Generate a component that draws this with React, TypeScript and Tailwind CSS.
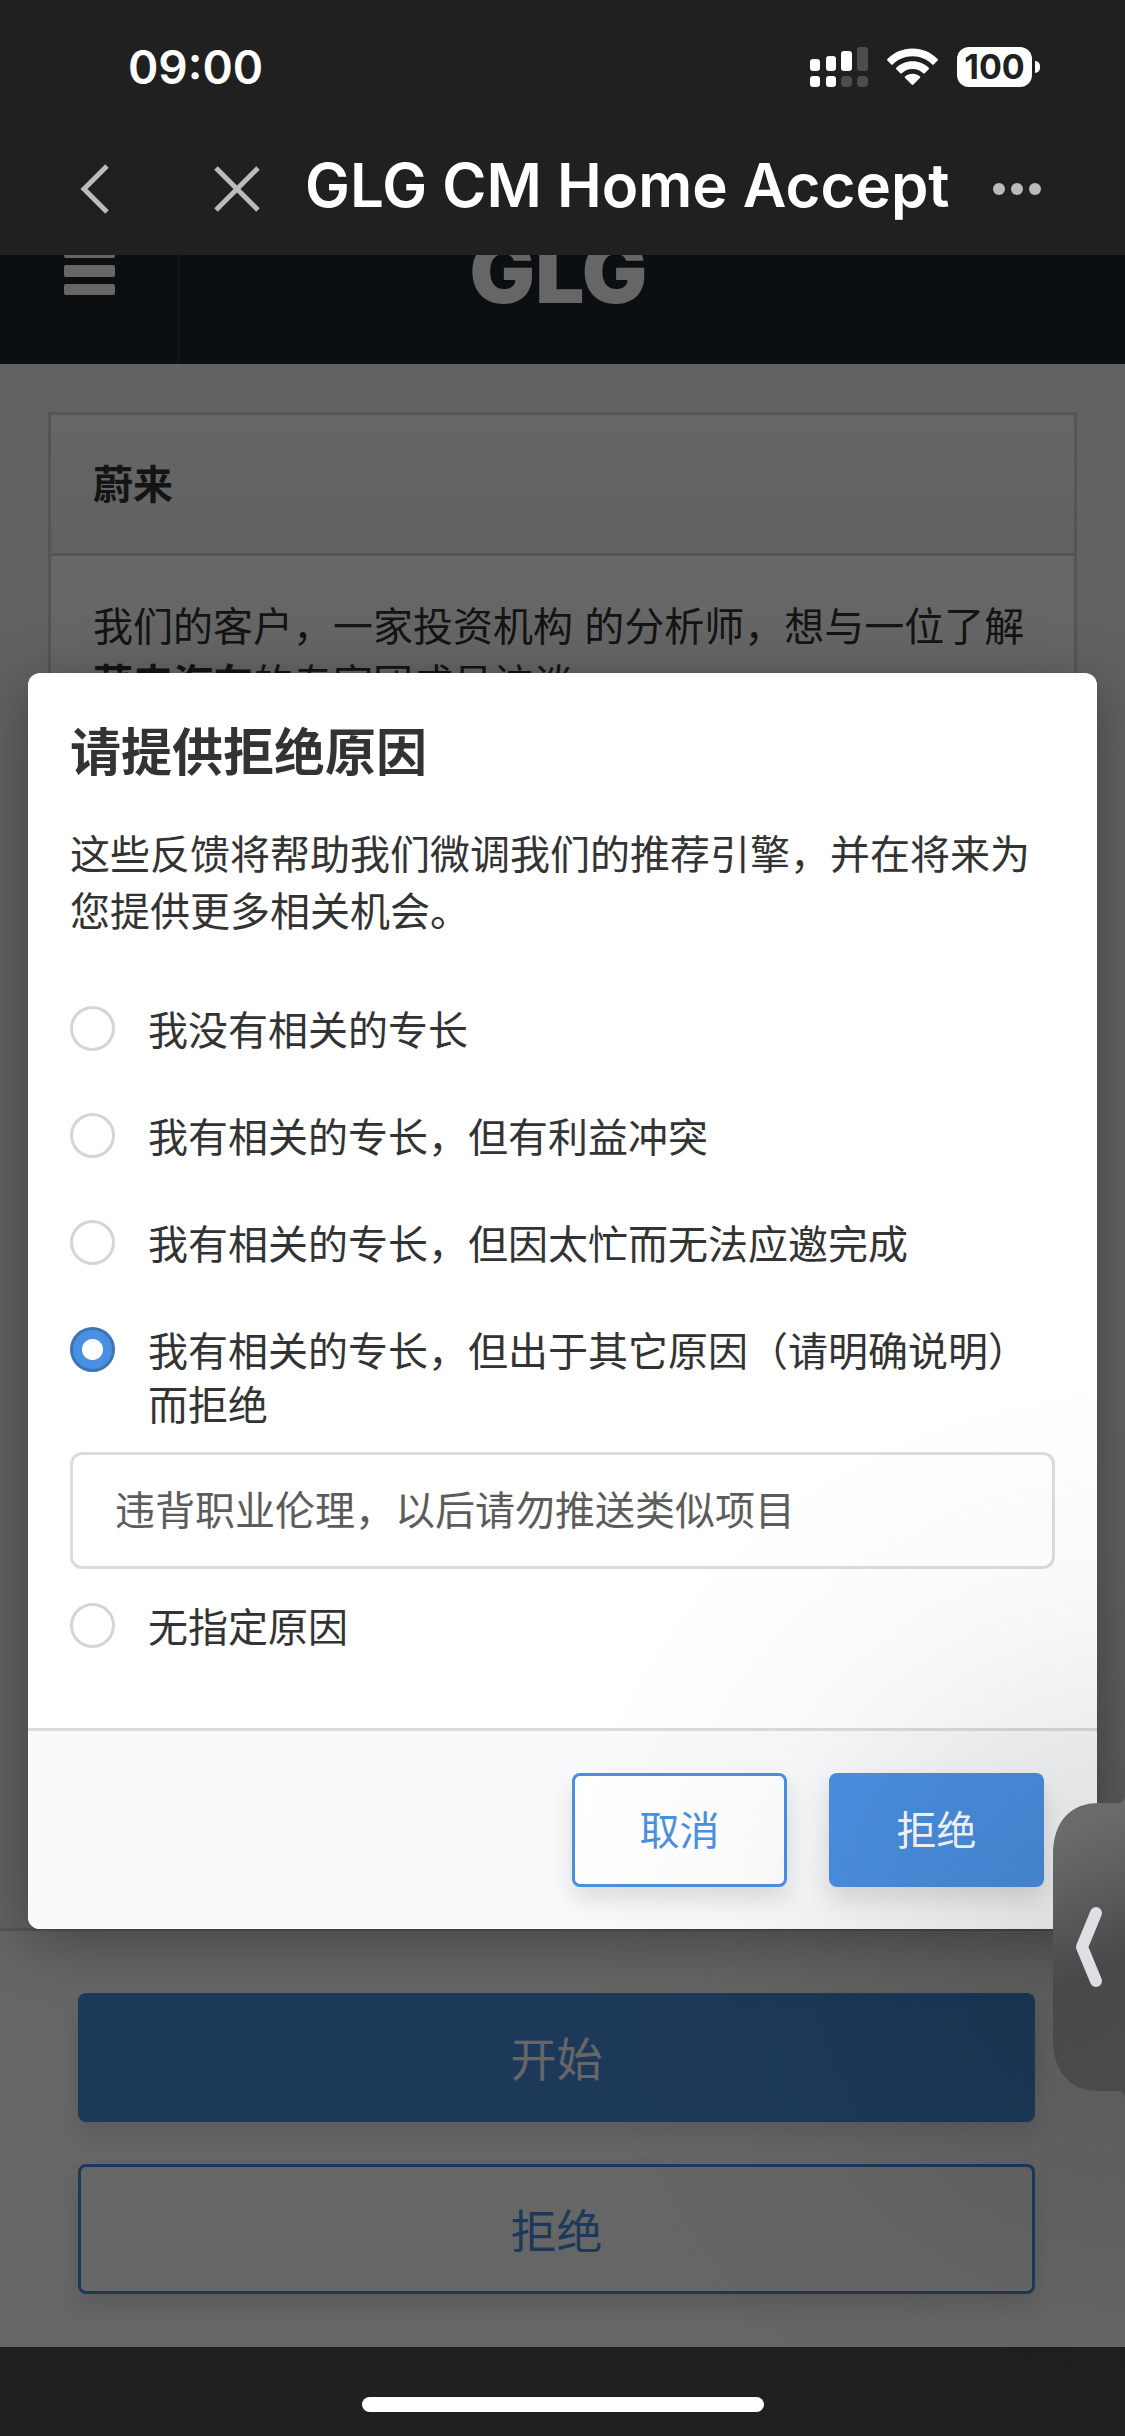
import React, { useState } from 'react';

const REASONS = [
  { id: 'no-expertise', label: '我没有相关的专长' },
  { id: 'conflict', label: '我有相关的专长，但有利益冲突' },
  { id: 'too-busy', label: '我有相关的专长，但因太忙而无法应邀完成' },
  { id: 'other', label: '我有相关的专长，但出于其它原因（请明确说明）而拒绝' },
  { id: 'unspecified', label: '无指定原因' },
];

function StatusBar() {
  return (
    <div className="h-[123px] pl-32 pr-[85px] pt-[38px] flex items-start justify-between">
      <span className="text-[46px] leading-[58px] font-semibold">09:00</span>
      <div className="h-[58px] flex items-center gap-[19px]">
        <svg width="58" height="40" viewBox="0 0 58 40" fill="#fff" aria-hidden="true">
          <rect x="0" y="12" width="10" height="12" rx="3" />
          <rect x="16" y="9" width="10" height="15" rx="3" />
          <rect x="31" y="4" width="11" height="20" rx="3" />
          <rect x="47" y="0" width="11" height="24" rx="3" fill="#4d4d4d" />
          <rect x="0" y="29" width="10" height="11" rx="3" />
          <rect x="16" y="29" width="10" height="11" rx="3" />
          <rect x="31" y="29" width="11" height="11" rx="4" fill="#4d4d4d" />
          <rect x="47" y="29" width="11" height="11" rx="4" fill="#4d4d4d" />
        </svg>
        <svg width="51" height="40" viewBox="0 0 51 40" fill="#fff" aria-hidden="true">
          <path d="M25.500 1.500C15.500 1.500 6.700 5.600.4 12c-.5.500-.5 1 0 1.500l3.900 3.900c.5.500 1 .5 1.500 0C10.900 12.400 17.800 9.300 25.500 9.300s14.600 3.100 19.700 8.100c.5.500 1 .5 1.500 0l3.900-3.900c.5-.5.5-1 0-1.500C44.300 5.600 35.500 1.500 25.500 1.500Z" />
          <path d="M25.500 14.200c-6.300 0-12 2.500-16.200 6.500-.5.500-.5 1 0 1.500l4 4c.5.500 1 .5 1.500 0 2.800-2.600 6.500-4.200 10.700-4.200s7.900 1.600 10.700 4.200c.5.500 1 .5 1.500 0l4-4c.5-.5.5-1 0-1.500-4.200-4-9.900-6.500-16.200-6.500Z" />
          <path d="M25.500 26.800c-2.900 0-5.400 1-7.400 2.700-.5.400-.5 1 0 1.500l6.500 6.600c.5.500 1.300.5 1.800 0l6.500-6.600c.5-.5.5-1.100 0-1.500-2-1.700-4.500-2.700-7.400-2.700Z" />
        </svg>
        <div className="flex items-center gap-[3px]">
          <span className="w-[75px] h-10 rounded-xl bg-white text-[#202020] text-[34px] leading-10 font-bold text-center">
            100
          </span>
          <span className="w-[5px] h-3 rounded-r-full bg-white" />
        </div>
      </div>
    </div>
  );
}

function NavBar() {
  return (
    <nav className="h-[132px] pl-20 pr-[84px] flex items-center">
      <button type="button" aria-label="返回" className="w-[132px] h-full flex items-center">
        <svg width="30" height="50" viewBox="0 0 30 50" fill="none" stroke="#bbb" strokeWidth="5">
          <path d="M27 2 4 25l23 23" />
        </svg>
      </button>
      <button type="button" aria-label="关闭" className="w-[93px] h-full flex items-center">
        <svg width="50" height="50" viewBox="0 0 50 50" fill="none" stroke="#bbb" strokeWidth="5">
          <path d="M4 4l42 42M46 4 4 46" />
        </svg>
      </button>
      <h1 className="flex-1 pb-2 text-[60px] leading-[72px] font-semibold whitespace-nowrap">
        GLG CM Home Accept
      </h1>
      <button type="button" aria-label="更多" className="h-full flex items-center">
        <svg width="48" height="12" viewBox="0 0 48 12" fill="#bbb">
          <circle cx="6" cy="6" r="6" />
          <circle cx="24" cy="6" r="6" />
          <circle cx="42" cy="6" r="6" />
        </svg>
      </button>
    </nav>
  );
}

function PageContent() {
  return (
    <div className="flex-1 flex flex-col">
      <header className="h-[109px] overflow-hidden bg-[#1c262d] text-white flex">
        <button type="button" aria-label="菜单" className="w-[180px] shrink-0 border-r-3 border-white/8 pl-16 pb-[69px] flex items-end">
          <svg width="51" height="49" viewBox="0 0 51 49" fill="#fff" className="shrink-0">
            <rect width="51" height="12" rx="2" />
            <rect y="19" width="51" height="12" rx="2" />
            <rect y="38" width="51" height="11" rx="2" />
          </svg>
        </button>
        <div className="flex-1 pr-[188px] pb-[42px] flex items-end justify-center">
          <span className="font-black text-[87px] leading-[100px]">GLG</span>
        </div>
      </header>

      <main className="flex-1 bg-[#f2f4f8] px-12 pt-12">
        <section className="h-full bg-white border-3 border-b-0 border-[#d5d5d5]">
          <div className="h-[141px] px-[42px] flex items-center border-b-3 border-[#d5d5d5] bg-linear-to-b from-white to-[#f2f4f8]">
            <h2 className="text-[40px] leading-[57px] font-bold">蔚来</h2>
          </div>
          <p className="px-[42px] pt-[42px] text-[40px] leading-[57px]">
            我们的客户，一家投资机构 的分析师，想与一位了解<b>蔚来汽车</b>的专家团成员访谈
          </p>
        </section>
      </main>

      <div className="border-t-3 border-[#d5d5d5] bg-white pl-[78px] pr-[90px] pt-[62px] pb-[53px] flex flex-col gap-[42px]">
        <button type="button" className="h-[129px] pt-1 rounded-lg bg-[#4a90e2] text-white text-[46px] shadow-[0_12px_24px_rgba(0,0,0,0.12)]">
          开始
        </button>
        <button type="button" className="h-[130px] pt-1 rounded-lg border-3 border-[#4a90e2] bg-white text-[#4a90e2] text-[46px] shadow-[0_12px_24px_rgba(0,0,0,0.12)]">
          拒绝
        </button>
      </div>
    </div>
  );
}

function DeclineDialog() {
  const [reason, setReason] = useState('other');
  const [comment, setComment] = useState('违背职业伦理，以后请勿推送类似项目');

  return (
    <div
      role="dialog"
      aria-labelledby="decline-title"
      className="w-full rounded-xl overflow-hidden bg-white shadow-[0_12px_60px_rgba(0,0,0,0.35)]"
    >
      <form className="px-[42px] pt-[50px] pb-[73px]">
        <h2 id="decline-title" className="text-[51px] leading-[60px] font-bold">请提供拒绝原因</h2>
        <p className="mt-[43px] text-[40px] leading-[57px]">
          这些反馈将帮助我们微调我们的推荐引擎，并在将来为您提供更多相关机会。
        </p>

        <div className="mt-16 flex flex-col">
          {REASONS.map((item) => (
            <div key={item.id} className="pb-[53px] last:pb-0 has-[textarea]:pb-8">
              <label className="flex items-start gap-[33px] text-[40px] leading-[54px]">
                <input
                  type="radio"
                  name="reason"
                  value={item.id}
                  checked={reason === item.id}
                  onChange={() => setReason(item.id)}
                  className="appearance-none shrink-0 mt-0.5 w-[45px] h-[45px] rounded-full border-3 border-[#d5d5d5] bg-white checked:border-[#3d74b4] checked:bg-[radial-gradient(circle,#fff_10px,#4a90e2_11px)]"
                />
                <span>{item.label}</span>
              </label>
              {item.id === 'other' && reason === 'other' && (
                <textarea
                  aria-label="请明确说明"
                  rows={1}
                  value={comment}
                  onChange={(e) => setComment(e.target.value)}
                  className="block mt-[19px] w-full h-[117px] rounded-xl border-3 border-[#dcdcdc] px-[42px] py-[27px] text-[40px] leading-[57px] text-[#5c5c5c] resize-none overflow-hidden"
                />
              )}
            </div>
          ))}
        </div>
      </form>

      <div className="border-t-3 border-[#dbdcdb] bg-[#f9fafc] px-[53px] py-[42px] flex justify-end gap-[42px]">
        <button type="button" className="w-[215px] h-[114px] pt-0.5 rounded-lg border-3 border-[#4a90e2] bg-white text-[#4a90e2] text-[40px] shadow-[0_12px_24px_rgba(0,0,0,0.12)]">
          取消
        </button>
        <button type="button" className="w-[215px] h-[114px] pt-0.5 rounded-lg bg-[#4a90e2] text-white text-[40px] shadow-[0_12px_24px_rgba(0,0,0,0.12)]">
          拒绝
        </button>
      </div>
    </div>
  );
}

function EdgeHandle() {
  return (
    <button type="button" aria-label="展开侧边栏" className="absolute right-0 bottom-[337px]">
      <svg width="72" height="304" viewBox="0 0 72 304" fill="none">
        <defs>
          <linearGradient id="handle" x1="0.4" y1="0" x2="0.5" y2="1">
            <stop offset="0.1" stopColor="#6a6a6a" />
            <stop offset="0.28" stopColor="#606060" />
            <stop offset="0.6" stopColor="#484848" />
            <stop offset="1" stopColor="#4a4b4a" />
          </linearGradient>
        </defs>
        <path
          d="M72 0c0 6-3 8-8 8H46C18 8 0 26 0 60v184c0 34 18 52 46 52h18c5 0 8 2 8 8Z"
          fill="url(#handle)"
        />
        <path d="M43 118 29 152l14 34" stroke="#dfdee5" strokeWidth="12" strokeLinecap="round" strokeLinejoin="round" />
      </svg>
    </button>
  );
}

export default function App() {
  return (
    <div className="relative min-h-screen flex flex-col overflow-hidden bg-[#202020] text-[#333] font-['Inter','Noto_Sans_CJK_SC',sans-serif]">
      <div className="text-white">
        <StatusBar />
        <NavBar />
      </div>

      <div className="relative flex-1 flex flex-col overflow-hidden">
        <PageContent />
        <div className="absolute inset-0 px-7 flex items-center bg-black/60">
          <DeclineDialog />
        </div>
      </div>

      <div className="h-[89px] pb-6 flex items-end justify-center">
        <span className="w-[402px] h-[15px] rounded-full bg-white" />
      </div>

      {/* soft shade around the edge handle */}
      <div className="absolute right-0 bottom-0 w-[600px] h-[1100px] pointer-events-none bg-[radial-gradient(circle_580px_at_100%_56%,rgba(0,0,0,0.13)_0%,rgba(0,0,0,0.06)_43%,rgba(0,0,0,0.02)_65%,rgba(0,0,0,0)_100%)]" />
      <EdgeHandle />
    </div>
  );
}
